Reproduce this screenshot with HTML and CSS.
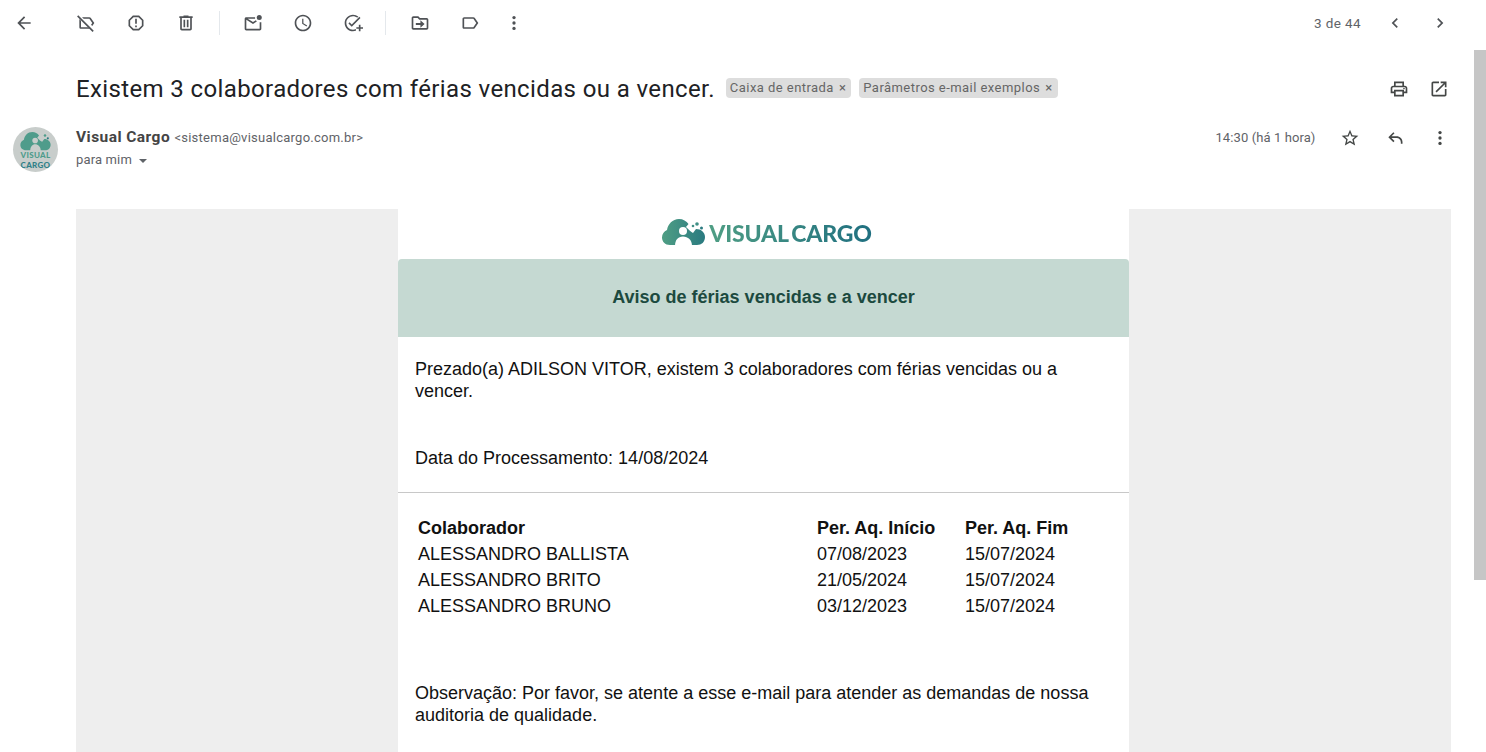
FILE: index.html
```html
<!DOCTYPE html>
<html lang="pt-BR">
<head>
  <meta charset="UTF-8">
  <title>Existem 3 colaboradores com férias vencidas ou a vencer.</title>
  <link rel="stylesheet" href="styles.css">
</head>
<body>
  <div id="page">
    <!-- toolbar -->
    <div class="toolbar">
      <span class="tool first"><svg viewBox="0 0 24 24"><path d="M20 11H7.83l5.59-5.59L12 4l-8 8 8 8 1.41-1.41L7.83 13H20v-2z"/></svg></span>
      <span class="gap"></span>
      <span class="tool"><svg viewBox="0 0 24 24"><path d="M4 7.2V17c0 1.1.9 2 2 2h10.8l-2-2H6V9.2zM9.2 7H16l3.55 5-1.5 2.1 1.44 1.44L22 12l-4.37-6.16C17.27 5.33 16.67 5 16 5H7.2z"/><path d="M2.7 2.7 1.3 4.1l18.6 18.6 1.4-1.4z"/></svg></span>
      <span class="tool"><svg viewBox="0 0 24 24"><path d="M15.73 3H8.27L3 8.27v7.46L8.27 21h7.46L21 15.73V8.27L15.73 3zM19 14.9L14.9 19H9.1L5 14.9V9.1L9.1 5h5.8L19 9.1v5.8z"/><path d="M11 7h2v6h-2zm0 8h2v2h-2z"/></svg></span>
      <span class="tool"><svg viewBox="0 0 24 24"><path d="M15 4V3H9v1H4v2h1v13c0 1.1.9 2 2 2h10c1.1 0 2-.9 2-2V6h1V4h-5zm2 15H7V6h10v13z"/><path d="M9 8h2v9H9zm4 0h2v9h-2z"/></svg></span>
      <span class="sep"></span>
      <span class="tool"><svg viewBox="0 0 24 24"><path d="M14.5 5H3.9C2.85 5 2 5.85 2 6.9V19c0 1.1.9 2 2 2h16c1.1 0 2-.9 2-2V11h-2v8H4V8.2l8 5 4.6-2.9-1.1-1.7L12 10.8 5.6 7h8.9z"/><circle cx="19.5" cy="5.5" r="3"/></svg></span>
      <span class="tool"><svg viewBox="0 0 24 24"><path d="M11.99 2C6.47 2 2 6.48 2 12s4.47 10 9.99 10C17.52 22 22 17.52 22 12S17.52 2 11.99 2zM12 20c-4.42 0-8-3.58-8-8s3.58-8 8-8 8 3.58 8 8-3.58 8-8 8zm.5-13H11v6l5.25 3.15.75-1.23-4.5-2.67z"/></svg></span>
      <span class="tool"><svg viewBox="0 0 24 24"><path d="M12 2C6.48 2 2 6.48 2 12s4.48 10 10 10c1.2 0 2.4-.2 3.5-.6v-2.15c-1.1.5-2.3.75-3.5.75-4.42 0-8-3.58-8-8s3.58-8 8-8c1.9 0 3.6.65 5 1.75l1.45-1.45C16.7 2.9 14.45 2 12 2z"/><path d="M7.9 11.1 6.5 12.5l4 4L21 6l-1.4-1.4-9.1 9.1zM19 14v3h-3v2h3v3h2v-3h3v-2h-3v-3z"/></svg></span>
      <span class="sep second"></span>
      <span class="tool"><svg viewBox="0 0 24 24"><path d="M20 6h-8l-2-2H4c-1.1 0-2 .9-2 2v12c0 1.1.9 2 2 2h16c1.1 0 2-.9 2-2V8c0-1.1-.9-2-2-2zm0 12H4V6h5.17l2 2H20v10z"/><path d="M12.5 8.8V12H7v2.5h5.5v3.2L17.5 13.2z"/></svg></span>
      <span class="tool"><svg viewBox="0 0 24 24"><path d="M17.63 5.84C17.27 5.33 16.67 5 16 5L5 5.01C3.9 5.01 3 5.9 3 7v10c0 1.1.9 1.99 2 1.99L16 19c.67 0 1.27-.33 1.63-.84L22 12l-4.37-6.16zM16 17H5V7h11l3.55 5L16 17z"/></svg></span>
      <span class="tool narrow"><svg viewBox="0 0 24 24"><circle cx="12" cy="5.5" r="2"/><circle cx="12" cy="12" r="2"/><circle cx="12" cy="18.5" r="2"/></svg></span>
      <span class="count">3 de 44</span>
      <span class="tool pager"><svg viewBox="0 0 24 24"><path d="M15.41 7.41L14 6l-6 6 6 6 1.41-1.41L10.83 12z"/></svg></span>
      <span class="tool pager"><svg viewBox="0 0 24 24"><path d="M10 6L8.59 7.41 13.17 12l-4.58 4.59L10 18l6-6z"/></svg></span>
    </div>

    <!-- subject -->
    <div class="subject-row">
      <h1 class="subject">Existem 3 colaboradores com férias vencidas ou a vencer.</h1>
      <span class="chip">Caixa de entrada <i>×</i></span>
      <span class="chip">Parâmetros e-mail exemplos <i>×</i></span>
      <span class="subject-icons">
        <svg viewBox="0 0 24 24"><path d="M19 8h-1V3H6v5H5c-1.66 0-3 1.34-3 3v6h4v4h12v-4h4v-6c0-1.66-1.34-3-3-3zM8 5h8v3H8V5zm8 14H8v-4h8v4zm2-4v-2H6v2H4v-4c0-.55.45-1 1-1h14c.55 0 1 .45 1 1v4h-2z"/><circle cx="18" cy="11.5" r="1"/></svg>
        <svg viewBox="0 0 24 24"><path d="M19 19H5V5h7V3H5c-1.11 0-2 .9-2 2v14c0 1.1.89 2 2 2h14c1.1 0 2-.9 2-2v-7h-2v7zM14 3v2h3.59l-9.83 9.83 1.41 1.41L19 6.41V10h2V3h-7z"/></svg>
      </span>
    </div>

    <!-- sender -->
    <div class="sender-row">
      <div class="avatar">
        <svg viewBox="0 0 43 27" class="avatar-cloud">
          <path d="M8 26C3 26 0 22.5 0 18.5c0-3.5 2-6 5-7.5C6 5 10.500 0 17 0c4 0 7.500 2 9.500 5L24 8c3 3 5 5 7 6l3-4c5 0 9 3.500 9 8 0 5-3.500 8-8 8z" fill="#4f9c8b"/>
          <circle cx="21" cy="12" r="4" fill="#c8cdcb"/>
          <path d="M14 27c0-6 3-9.500 7-9.500s8 3.500 8 9.500z" fill="#c8cdcb"/>
          <circle cx="35" cy="5" r="1.800" fill="#4f9c8b"/><circle cx="39" cy="9" r="1.500" fill="#2a7a80"/>
        </svg>
        <span class="avatar-text">VISUAL<br><em>CARGO</em></span>
      </div>
      <div class="sender-info">
        <div class="sender-line"><b>Visual Cargo</b> <span class="addr">&lt;sistema@visualcargo.com.br&gt;</span></div>
        <div class="to-line">para mim <span class="caret"></span></div>
      </div>
      <span class="time">14:30 (há 1 hora)</span>
      <span class="msg-icon"><svg viewBox="0 0 24 24"><path d="M22 9.24l-7.19-.62L12 2 9.19 8.63 2 9.24l5.46 4.73L5.82 21 12 17.27 18.18 21l-1.63-7.03L22 9.24zM12 15.4l-3.76 2.27 1-4.28-3.32-2.88 4.38-.38L12 6.1l1.71 4.04 4.38.38-3.32 2.88 1 4.28L12 15.4z"/></svg></span>
      <span class="msg-icon"><svg viewBox="0 0 24 24"><path d="M21 19h-2v-2c0-2.76-2.24-5-5-5H7.83l3.58 3.59L10 17l-6-6 6-6 1.41 1.41L7.83 10H14c3.87 0 7 3.13 7 7z"/></svg></span>
      <span class="msg-icon"><svg viewBox="0 0 24 24"><circle cx="12" cy="5.5" r="2"/><circle cx="12" cy="12" r="2"/><circle cx="12" cy="18.5" r="2"/></svg></span>
    </div>

    <!-- message body -->
    <div class="mail-bg">
      <div class="mail">
        <div class="logo">
          <svg viewBox="0 0 43 27" class="logo-mark">
            <defs><linearGradient id="cloudGrad" x1="0" x2="1"><stop offset="0" stop-color="#4f9e84"/><stop offset="1" stop-color="#2a7a80"/></linearGradient></defs>
            <path d="M8 26C3 26 0 22.5 0 18.5c0-3.5 2-6 5-7.5C6 5 10.500 0 17 0c4 0 7.500 2 9.500 5L24 8c3 3 5 5 7 6l3-4c5 0 9 3.500 9 8 0 5-3.500 8-8 8z" fill="url(#cloudGrad)"/>
            <circle cx="21" cy="12" r="4" fill="#fff"/>
            <path d="M13 27c0-6 3-9.500 8-9.500s9 3.500 9 9.500z" fill="#fff"/>
            <circle cx="35" cy="5" r="1.800" fill="#3f8f85"/><circle cx="39.500" cy="9" r="1.500" fill="#2a7a80"/><circle cx="31" cy="7" r="1.300" fill="#3f8f85"/>
          </svg>
          <span class="logo-text">VISUAL CARGO</span>
        </div>
        <div class="mail-head">Aviso de férias vencidas e a vencer</div>
        <div class="intro">
          <p>Prezado(a) ADILSON VITOR, existem 3 colaboradores com férias vencidas ou a vencer.</p>
          <p class="date">Data do Processamento: 14/08/2024</p>
        </div>
        <div class="table-wrap">
          <table>
            <tr><th class="c1">Colaborador</th><th class="c2">Per. Aq. Início</th><th>Per. Aq. Fim</th></tr>
            <tr><td>ALESSANDRO BALLISTA</td><td>07/08/2023</td><td>15/07/2024</td></tr>
            <tr><td>ALESSANDRO BRITO</td><td>21/05/2024</td><td>15/07/2024</td></tr>
            <tr><td>ALESSANDRO BRUNO</td><td>03/12/2023</td><td>15/07/2024</td></tr>
          </table>
        </div>
        <p class="note">Observação: Por favor, se atente a esse e-mail para atender as demandas de nossa auditoria de qualidade.</p>
      </div>
    </div>
  </div>
  <div class="scrollbar"><div class="thumb"></div></div>
</body>
</html>
```

FILE: styles.css
```css
/* Reset */
html, body {
  margin: 0;
  padding: 0;
  height: 100%;
  overflow: hidden;
  background: #fff;
  font-family: Roboto, Arial, sans-serif;
  color: #202124;
}
#page {
  width: 1474px;
  height: 752px;
  overflow: hidden;
}
svg { fill: #4f5256; display: block; }

/* Toolbar */
.toolbar {
  display: flex;
  align-items: center;
  height: 46px;
  padding-left: 4px;
}
.tool {
  display: flex;
  align-items: center;
  justify-content: center;
  width: 40px;
  height: 40px;
  margin: 0 5px;
}
.tool svg { width: 20px; height: 20px; }
.tool.first { margin: 0; }
.tool.narrow { margin: 0 0 0 -1px; }
.gap { width: 17px; }
.sep {
  width: 1px;
  height: 24px;
  margin: 0 8px;
  background: #e4e8ec;
}
.sep.second { margin: 0 9px 0 7px; }
.count {
  margin-left: auto;
  margin-right: 11.5px;
  font-size: 13.5px;
  letter-spacing: 0.4px;
  color: #5f6368;
}
.tool.pager { margin: 0 2.5px; }
.tool.pager:last-child { margin-right: 14px; }

/* Subject */
.subject-row {
  display: flex;
  align-items: center;
  height: 38px;
  margin-top: 24px;
  padding-left: 76px;
}
.subject {
  margin: 0 11px 0 0;
  font-size: 24px;
  font-weight: 400;
  letter-spacing: 0.375px;
  white-space: nowrap;
  color: #202124;
}
.chip {
  display: flex;
  align-items: center;
  height: 20px;
  margin: 0 8px 2px 0;
  padding: 0 5px 1px 4px;
  border-radius: 4px;
  background: #dddddd;
  color: #666;
  font-size: 13px;
  letter-spacing: 0.45px;
  white-space: nowrap;
  box-sizing: border-box;
}
.chip i {
  font-style: normal;
  margin-left: 5px;
  font-size: 13px;
}
.subject-icons {
  display: flex;
  gap: 20px;
  margin-left: auto;
  margin-right: 25px;
}
.subject-icons svg { width: 20px; height: 20px; fill: #444746; }

/* Sender */
.sender-row {
  display: flex;
  align-items: flex-start;
  height: 82px;
  margin-top: 19px;
  padding-left: 13px;
}
.avatar {
  position: relative;
  width: 45px;
  height: 45px;
  margin-right: 18px;
  border-radius: 50%;
  background: #c8cdcb;
  overflow: hidden;
}
.avatar-cloud { width: 31px; height: 19px; margin: 5px auto 0; }
.avatar-text {
  display: block;
  margin-top: -1px;
  text-align: center;
  font-family: Lato, sans-serif;
  font-size: 8px;
  line-height: 10px;
  font-weight: 900;
  letter-spacing: 0.3px;
  color: #4f9c8b;
}
.avatar-text em { font-style: normal; color: #2f8088; }
.sender-info { flex: 1; }
.sender-line { font-size: 15.5px; line-height: 20px; letter-spacing: 0.45px; }
.sender-line b { font-weight: 700; color: #444; }
.addr { font-size: 13px; letter-spacing: 0.25px; color: #5f6368; }
.to-line { margin-top: 3px; font-size: 13px; letter-spacing: 0.15px; line-height: 18px; color: #5f6368; }
.caret {
  display: inline-block;
  margin-left: 4px;
  vertical-align: middle;
  border: 4.5px solid transparent;
  border-top: 4.5px solid #5f6368;
  border-bottom: 0;
}
.time {
  padding-top: 1px;
  margin-right: 12px;
  font-size: 13px;
  letter-spacing: 0.1px;
  line-height: 20px;
  color: #5f6368;
}
.msg-icon { width: 20px; height: 20px; margin: 1px 12.5px 0; }
.msg-icon svg { width: 20px; height: 20px; fill: #444746; }
.msg-icon:last-child { margin-right: 24px; }

/* Message */
.mail-bg {
  width: 1375px;
  margin-left: 76px;
  height: 600px;
  background: #eeeeee;
}
.mail {
  width: 731px;
  margin: 0 auto;
  height: 100%;
  background: #fff;
  font-family: "Liberation Sans", Arial, sans-serif;
  font-size: 18px;
  line-height: 22px;
  color: #111;
}
.logo {
  display: flex;
  align-items: center;
  justify-content: center;
  height: 50px;
  gap: 4px;
  padding: 0 0 3px 7px;
  box-sizing: border-box;
}
.logo-mark { width: 43px; height: 27px; }
.logo-text {
  font-family: Lato, sans-serif;
  font-size: 23px;
  font-weight: 900;
  letter-spacing: -0.2px;
  word-spacing: -2px;
  background: linear-gradient(90deg, #4f9e84, #1f6f80);
  -webkit-background-clip: text;
  background-clip: text;
  color: transparent;
}
.mail-head {
  display: flex;
  align-items: center;
  justify-content: center;
  height: 78px;
  padding-bottom: 2px;
  box-sizing: border-box;
  border-radius: 4px 4px 0 0;
  background: #c5d9d2;
  color: #1c4a3f;
  font-size: 18px;
  font-weight: 700;
}
.intro {
  padding: 21px 17px 23px;
  border-bottom: 1px solid #c8c8c8;
}
.intro p { margin: 0; }
.intro .date { margin-top: 45px; }
.table-wrap { padding: 22px 20px 0; }
table { border-collapse: collapse; }
th, td {
  padding: 0;
  height: 26px;
  text-align: left;
  font-size: 18px;
  font-weight: 400;
}
th { font-weight: 700; }
.c1 { width: 399px; }
.c2 { width: 148px; }
.note { margin: 63px 17px 0; }

/* Scrollbar on the right edge */
.scrollbar {
  position: fixed;
  top: 0;
  right: 0;
  width: 12px;
  height: 752px;
  background: #fff;
}
.thumb {
  width: 12px;
  height: 530px;
  margin-top: 50px;
  background: #c6c6c6;
}
```
